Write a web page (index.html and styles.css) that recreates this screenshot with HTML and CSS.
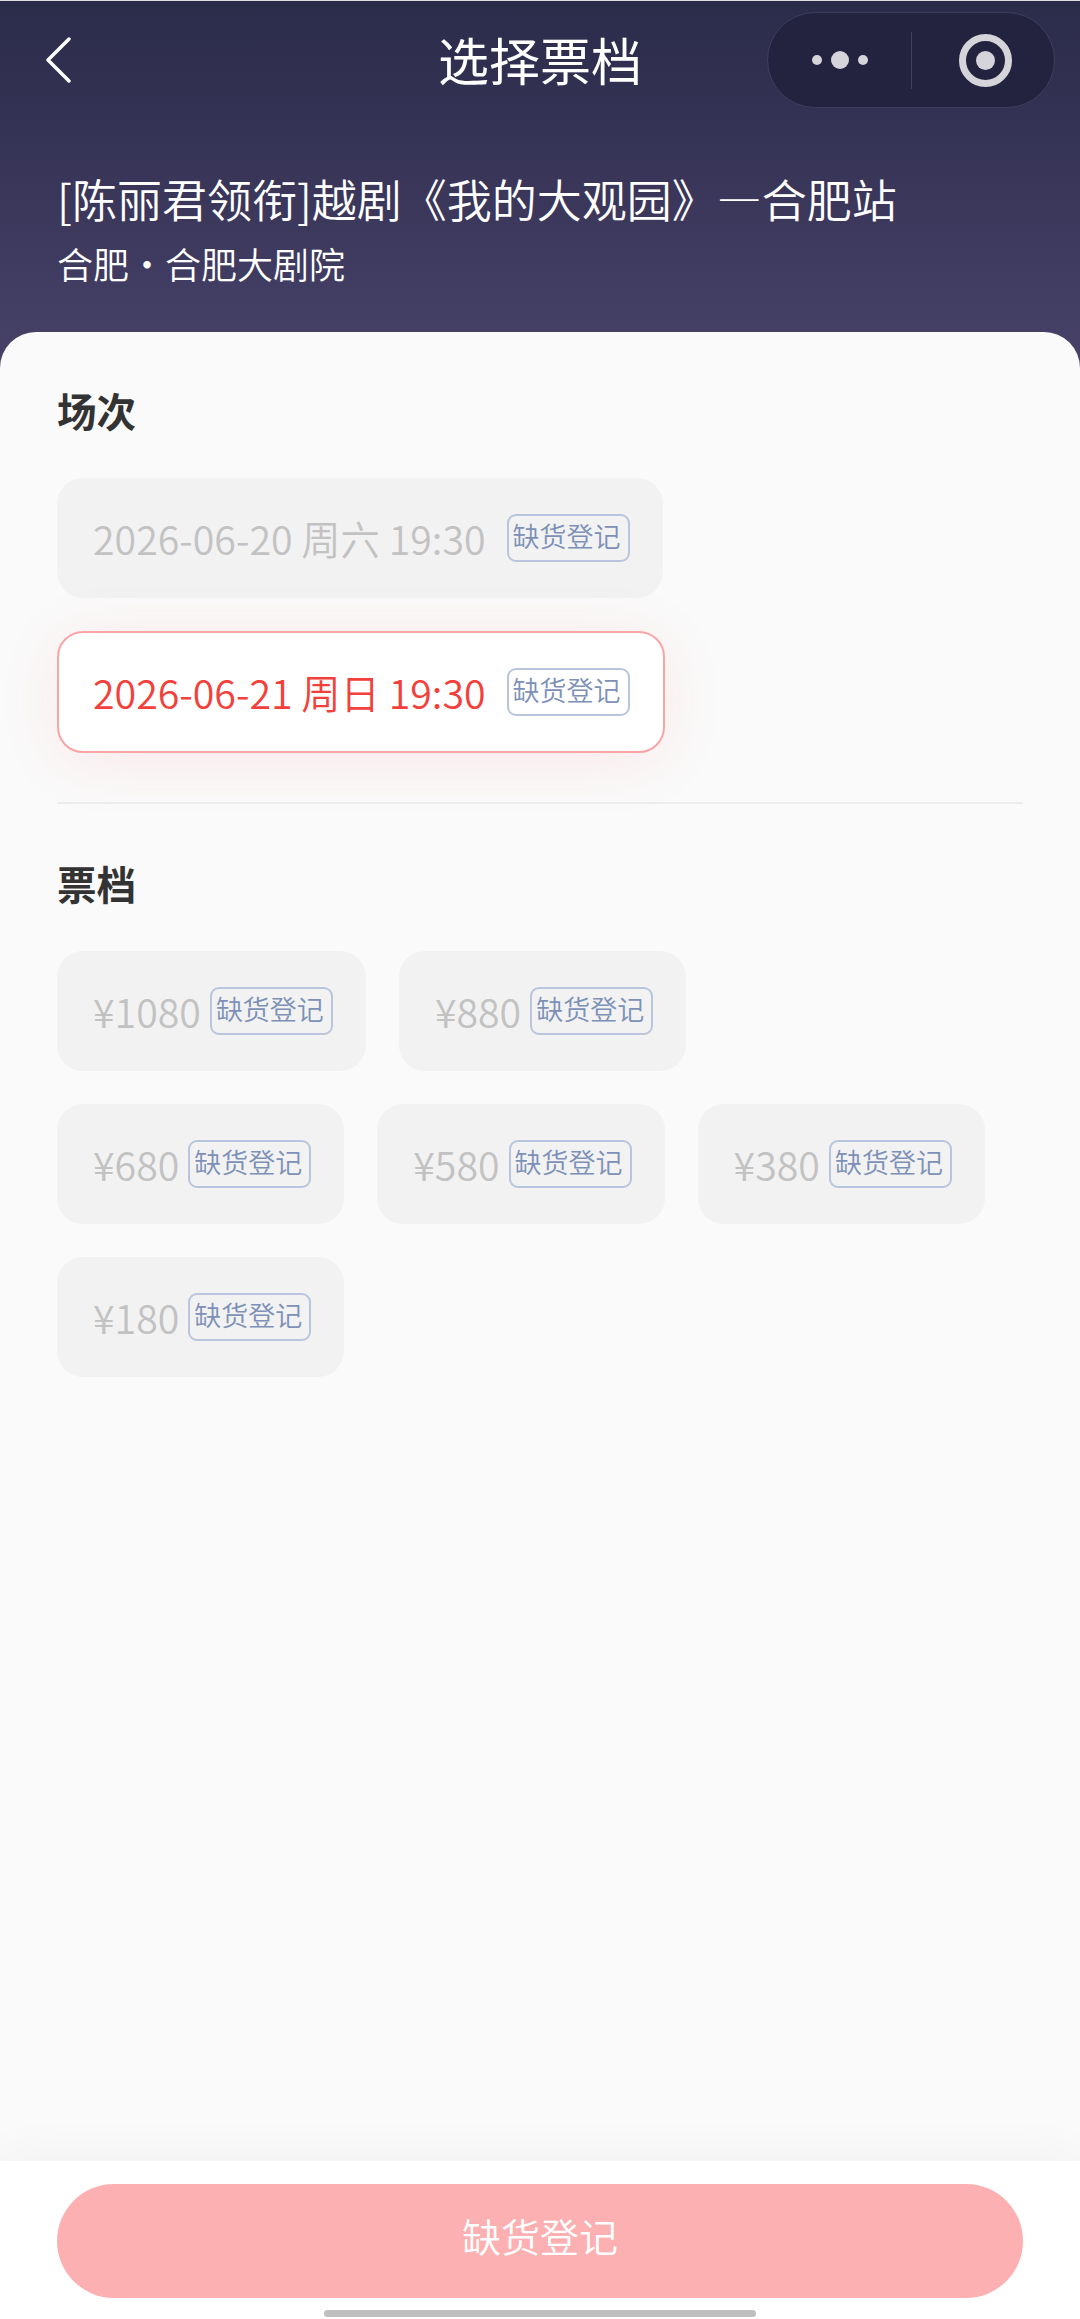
FILE: index.html
```html
<!DOCTYPE html>
<html lang="zh-CN">
<head>
  <meta charset="UTF-8" />
  <title>选择票档</title>
  <link rel="stylesheet" href="styles.css">
</head>
<body>
  <div class="page">
    <header class="top">
      <div class="nav">
        <div class="nav-left">
          <svg class="back" width="26" height="46" viewBox="0 0 26 46"><path d="M24 2 L3 23 L24 44" fill="none" stroke="#fff" stroke-width="3.4" stroke-linecap="round" stroke-linejoin="round"/></svg>
        </div>
        <div class="nav-title">选择票档</div>
        <div class="nav-right">
          <div class="capsule">
            <div class="capsule-dots">
              <span class="dot"></span><span class="dot dot-big"></span><span class="dot"></span>
            </div>
            <div class="capsule-line"></div>
            <div class="capsule-target">
              <span class="target-ring"><span class="target-core"></span></span>
            </div>
          </div>
        </div>
      </div>
      <div class="show-name">[陈丽君领衔]越剧《我的大观园》—合肥站</div>
      <div class="show-place">合肥・合肥大剧院</div>
    </header>

    <main class="sheet">
      <section class="block block-session">
        <h2 class="block-title">场次</h2>
        <div class="chip-row">
          <div class="chip"><span class="chip-text date">2026-06-20 周六 19:30</span><span class="tag">缺货登记</span></div>
        </div>
        <div class="chip-row">
          <div class="chip chip-active"><span class="chip-text date">2026-06-21 周日 19:30</span><span class="tag">缺货登记</span></div>
        </div>
      </section>

      <section class="block block-price">
        <h2 class="block-title">票档</h2>
        <div class="chip-row">
          <div class="chip chip-price"><span class="chip-text">¥1080</span><span class="tag">缺货登记</span></div>
          <div class="chip chip-price"><span class="chip-text">¥880</span><span class="tag">缺货登记</span></div>
        </div>
        <div class="chip-row">
          <div class="chip chip-price"><span class="chip-text">¥680</span><span class="tag">缺货登记</span></div>
          <div class="chip chip-price"><span class="chip-text">¥580</span><span class="tag">缺货登记</span></div>
          <div class="chip chip-price"><span class="chip-text">¥380</span><span class="tag">缺货登记</span></div>
        </div>
        <div class="chip-row">
          <div class="chip chip-price"><span class="chip-text">¥180</span><span class="tag">缺货登记</span></div>
        </div>
      </section>
    </main>

    <footer class="bottom">
      <button class="submit">缺货登记</button>
      <div class="home-bar"></div>
    </footer>
  </div>
</body>
</html>
```

FILE: styles.css
```css
* {
  box-sizing: border-box;
}
html, body {
  margin: 0;
  padding: 0;
}
body {
  font-family: "Noto Sans CJK SC", "Noto Sans", sans-serif;
  background: #fafafa;
}
.page {
  width: 1080px;
  height: 2319px;
  display: flex;
  flex-direction: column;
  overflow: hidden;
  background: linear-gradient(180deg, #2b2b4a 0, #474168 360px);
}

/* header */
.top {
  height: 332px;
  flex: none;
  color: #fff;
  padding-top: 11px;
  border-top: 1px solid #dcdcdc;
}
.nav {
  height: 96px;
  display: grid;
  grid-template-columns: 1fr auto 1fr;
  align-items: center;
}
.nav-left {
  padding-left: 45px;
  display: flex;
}
.nav-title {
  font-size: 51px;
  line-height: 70px;
  margin-top: -2px;
}
.nav-right {
  display: flex;
  justify-content: flex-end;
  padding-right: 25px;
}
.capsule {
  width: 288px;
  height: 96px;
  border-radius: 48px;
  background: #24233f;
  border: 1px solid #3f3e5e;
  display: flex;
  align-items: center;
}
.capsule-dots {
  width: 143px;
  display: flex;
  align-items: center;
  justify-content: center;
  gap: 9px;
}
.dot {
  width: 10px;
  height: 10px;
  border-radius: 50%;
  background: #d5d4da;
}
.dot-big {
  width: 18px;
  height: 18px;
}
.capsule-line {
  width: 1px;
  height: 57px;
  background: #3f3e5e;
}
.capsule-target {
  flex: 1;
  display: flex;
  justify-content: center;
  padding-left: 4px;
}
.target-ring {
  width: 53px;
  height: 53px;
  border-radius: 50%;
  border: 7px solid #d5d4da;
  display: flex;
  align-items: center;
  justify-content: center;
}
.target-core {
  width: 19px;
  height: 19px;
  border-radius: 50%;
  background: #d5d4da;
}
.show-name {
  margin-top: 61px;
  padding-left: 57px;
  font-size: 45px;
  line-height: 60px;
  font-weight: 350;
  white-space: nowrap;
}
.show-place {
  margin-top: 9px;
  padding-left: 57px;
  font-size: 36px;
  line-height: 50px;
  font-weight: 350;
}

/* sheet */
.sheet {
  flex: 1;
  background: #fafafa;
  border-radius: 36px 36px 0 0;
  padding: 0 57px;
}
.block-session {
  padding-top: 50px;
  padding-bottom: 49px;
  border-bottom: 2px solid #ececec;
}
.block-price {
  padding-top: 51px;
}
.block-title {
  margin: 0 0 40px;
  font-size: 39.5px;
  line-height: 56px;
  font-weight: 700;
  color: #333;
}
.chip-row {
  display: flex;
  gap: 33px;
  margin-bottom: 33px;
}
.block .chip-row:last-child {
  margin-bottom: 0;
}
.chip {
  height: 120px;
  padding: 0 33px 0 36px;
  display: flex;
  align-items: center;
  gap: 21px;
  border-radius: 26px;
  background: #f2f2f2;
}
.chip-price {
  gap: 9px;
}
.chip-text {
  margin-top: -2px;
  font-size: 39.3px;
  font-weight: 350;
  color: #c2c2c2;
  white-space: nowrap;
}
.chip-active {
  height: 122px;
  background: #fff;
  border: 2px solid #f9a5a5;
  padding-left: 34px;
  box-shadow: 0 8px 64px rgba(242, 58, 58, 0.09);
}
.chip-active .chip-text {
  color: #f3403b;
}
.tag {
  width: 123px;
  height: 48px;
  flex: none;
  padding-right: 3px;
  border: 2px solid #b8c5dc;
  border-radius: 9px;
  font-size: 27px;
  line-height: 40px;
  text-align: center;
  font-weight: 350;
  color: #7c90b8;
  white-space: nowrap;
}

/* bottom bar */
.bottom {
  height: 158px;
  flex: none;
  background: #fff;
  padding: 23px 57px 0;
  box-shadow: 0 0 50px rgba(0, 0, 0, 0.05);
  position: relative;
}
.submit {
  display: block;
  width: 100%;
  height: 114px;
  padding: 0 0 12px;
  border: none;
  border-radius: 57px;
  background: #fdb0b1;
  color: #fff;
  font-family: inherit;
  font-size: 39px;
  font-weight: 350;
}
.home-bar {
  width: 432px;
  height: 7px;
  margin: 12px auto 0;
  border-radius: 4px;
  background: #bfbfbf;
}
```
